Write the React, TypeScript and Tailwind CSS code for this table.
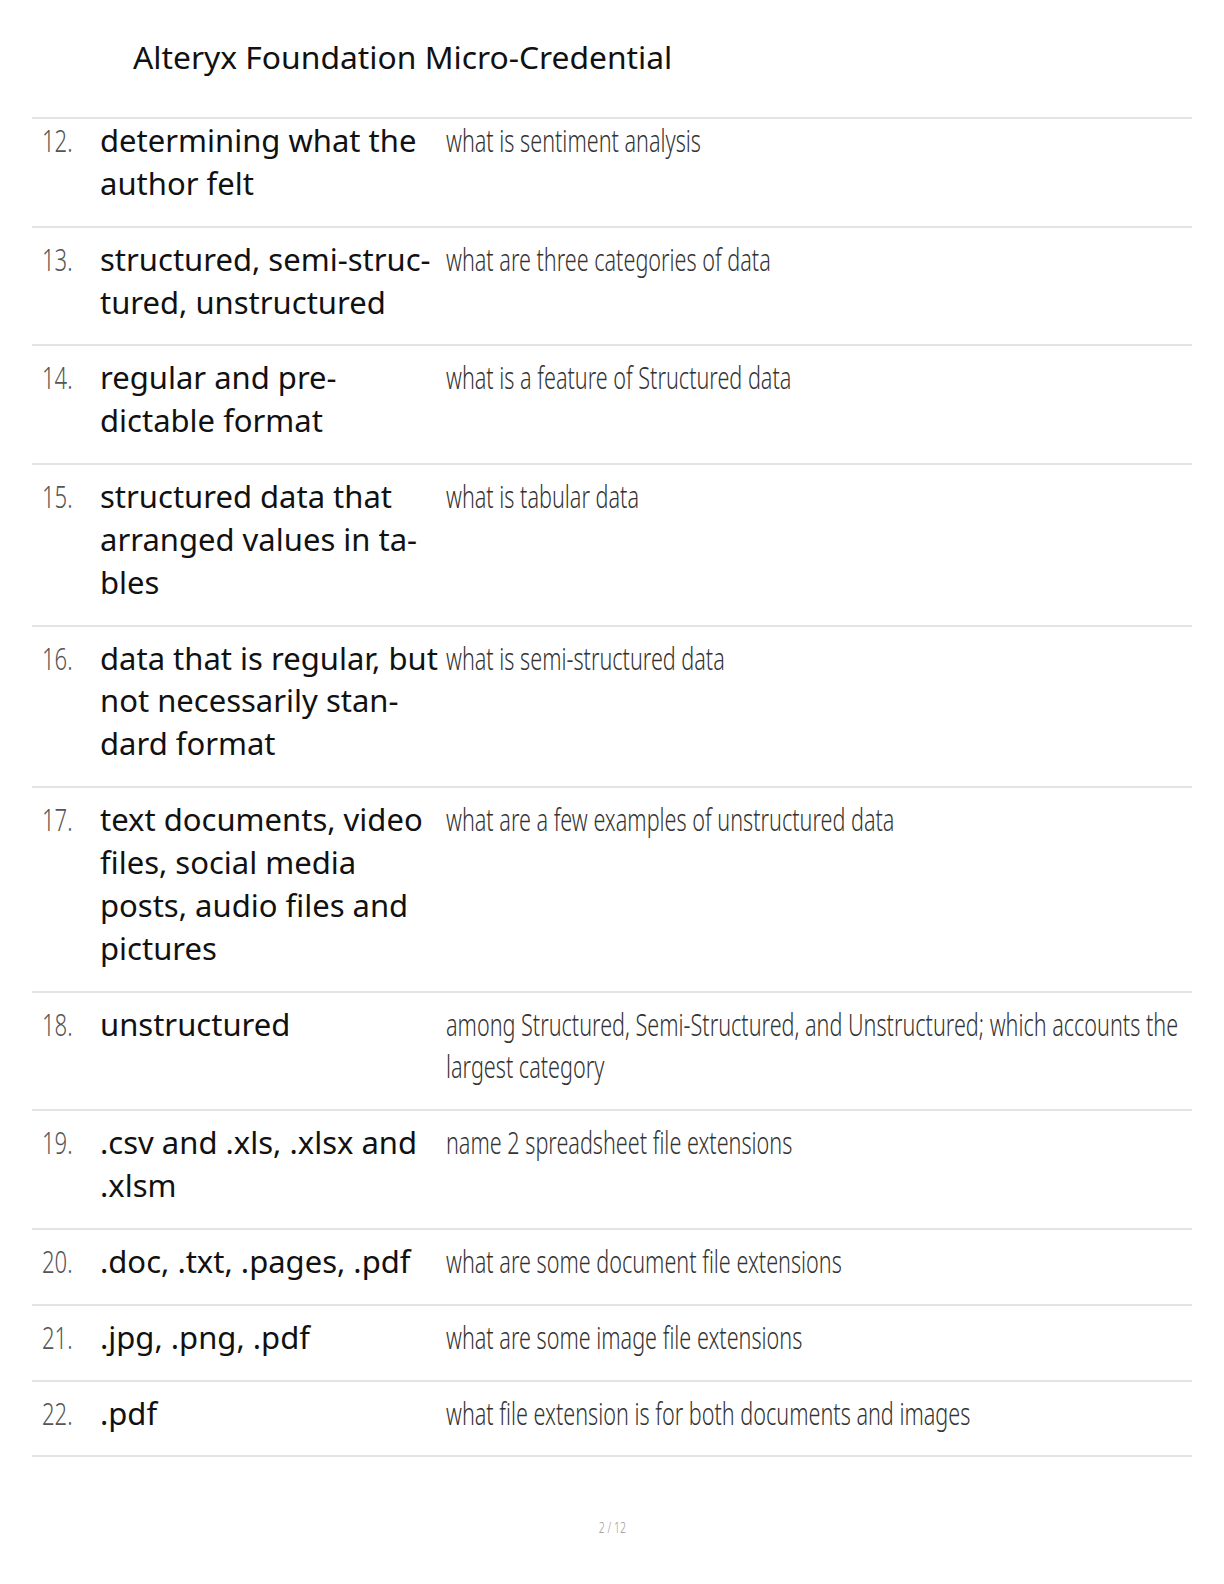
const cards: { n: number; term: string[]; def: string[] }[] = [
  { n: 12, term: ["determining what the", "author felt"], def: ["what is sentiment analysis"] },
  { n: 13, term: ["structured, semi-struc-", "tured, unstructured"], def: ["what are three categories of data"] },
  { n: 14, term: ["regular and pre-", "dictable format"], def: ["what is a feature of Structured data"] },
  { n: 15, term: ["structured data that", "arranged values in ta-", "bles"], def: ["what is tabular data"] },
  {
    n: 16,
    term: ["data that is regular, but", "not necessarily stan-", "dard format"],
    def: ["what is semi-structured data"],
  },
  {
    n: 17,
    term: ["text documents, video", "files, social media", "posts, audio files and", "pictures"],
    def: ["what are a few examples of unstructured data"],
  },
  {
    n: 18,
    term: ["unstructured"],
    def: ["among Structured, Semi-Structured, and Unstructured; which accounts the", "largest category"],
  },
  { n: 19, term: [".csv and .xls, .xlsx and", ".xlsm"], def: ["name 2 spreadsheet file extensions"] },
  { n: 20, term: [".doc, .txt, .pages, .pdf"], def: ["what are some document file extensions"] },
  { n: 21, term: [".jpg, .png, .pdf"], def: ["what are some image file extensions"] },
  { n: 22, term: [".pdf"], def: ["what file extension is for both documents and images"] },
];

const App = () => {
  return (
    <div className="w-[1224px] min-h-[1584px] overflow-x-hidden bg-white font-['Noto_Sans',sans-serif] text-[#111]">
      <div className="pt-[37px] pl-[133px] h-[117px]">
        <h1 className="text-[31.8px] leading-[40px] font-normal">Alteryx Foundation Micro-Credential</h1>
      </div>

      <div className="mx-[32px] border-t-2 border-[#e3e3e8]">
        {cards.map((c, i) => (
          <div
            key={c.n}
            className={`flex border-b-2 border-[#e3e3e8] pb-[21px] ${i === 0 ? "pt-0" : "pt-[10px]"}`}
          >
            <div className="w-[68px] shrink-0 pl-[10px]">
              <span className="inline-block origin-left scale-x-[0.69] whitespace-nowrap text-[32px] leading-[42.85px] font-light text-[#555]">
                {c.n}.
              </span>
            </div>
            <div className="w-[346px] shrink-0 text-[31px] leading-[42.85px]">
              {c.term.map((line) => (
                <div key={line} className="whitespace-nowrap">
                  {line}
                </div>
              ))}
            </div>
            <div className="flex-1 min-w-0">
              {c.def.map((line) => (
                <div key={line} className="h-[42.85px]">
                  <span className="inline-block origin-left scale-x-[0.675] whitespace-nowrap text-[32px] leading-[42.85px] font-light text-[#333]">
                    {line}
                  </span>
                </div>
              ))}
            </div>
          </div>
        ))}
      </div>

      <div className="pt-[60px] flex justify-center">
        <span className="inline-block scale-x-[0.7] text-[15px] leading-[20px] font-light text-[#999]">
          2 / 12
        </span>
      </div>
    </div>
  );
};

export default App;
